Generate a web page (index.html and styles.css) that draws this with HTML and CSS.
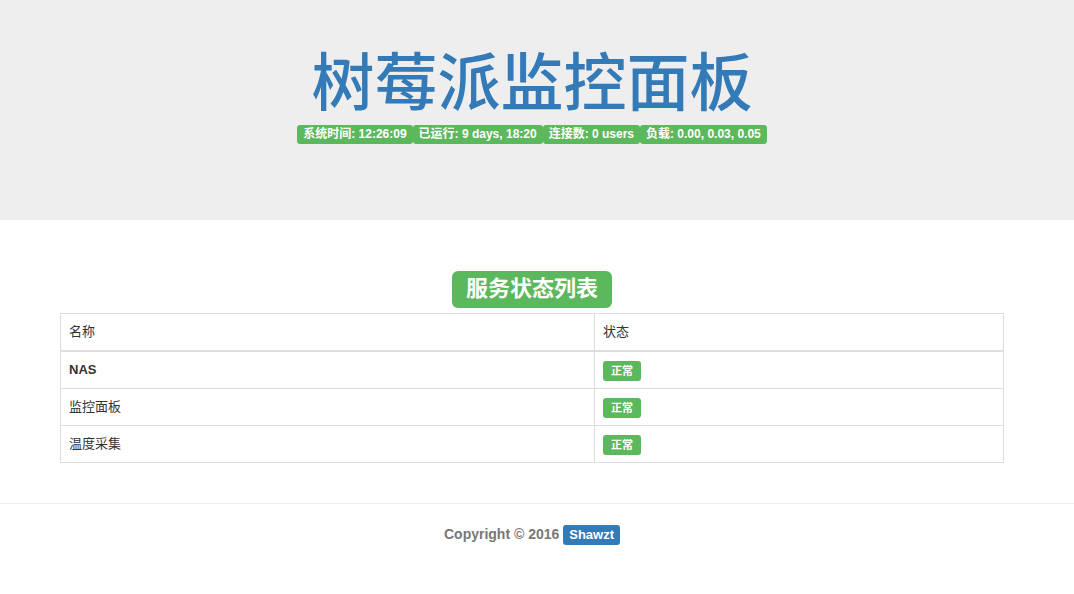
FILE: index.html
```html
<!DOCTYPE html>
<html lang="zh-CN">
<head>
<meta charset="utf-8">
<title>树莓派监控面板</title>
<link rel="stylesheet" href="styles.css">
</head>
<body>
<header class="jumbotron">
  <div class="inner">
    <h1 class="title">树莓派监控面板</h1>
    <div class="stats"><span class="label green">系统时间: 12:26:09</span><span class="label green">已运行: 9 days, 18:20</span><span class="label green">连接数: 0 users</span><span class="label green">负载: 0.00, 0.03, 0.05</span></div>
  </div>
</header>
<main class="container">
  <h3 class="section-title"><span class="section-label">服务状态列表</span></h3>
  <table class="table">
    <thead>
      <tr><th class="col-name">名称</th><th>状态</th></tr>
    </thead>
    <tbody>
      <tr><td class="strong">NAS</td><td><span class="badge">正常</span></td></tr>
      <tr><td>监控面板</td><td><span class="badge">正常</span></td></tr>
      <tr><td>温度采集</td><td><span class="badge">正常</span></td></tr>
    </tbody>
  </table>
</main>
<footer class="footer">
  <hr class="rule">
  <p class="copy">Copyright © 2016 <span class="label blue">Shawzt</span></p>
</footer>
</body>
</html>
```

FILE: styles.css
```css
html, body {
  margin: 0;
  padding: 0;
  background: #fff;
}
body {
  font-family: "Liberation Sans", "Noto Sans CJK SC", sans-serif;
  font-size: 14px;
  line-height: 1.42857;
  color: #333;
}
.jumbotron {
  background: #eee;
  height: 220px;
  box-sizing: border-box;
  padding-top: 40px;
}
.inner {
  width: 1064px;
  display: flex;
  flex-direction: column;
  align-items: center;
}
.title {
  margin: 0;
  font-family: "Noto Sans CJK SC", sans-serif;
  font-size: 63px;
  line-height: 76px;
  font-weight: 500;
  color: #337ab7;
}
.stats {
  display: flex;
  margin-top: 9px;
}
.label {
  display: inline-block;
  font-family: "Liberation Sans", "Noto Sans CJK SC", sans-serif;
  font-weight: 700;
  color: #fff;
  border-radius: 3px;
  white-space: nowrap;
}
.stats .label {
  font-size: 12px;
  line-height: 12px;
  padding: 3px 6px 4px;
}
.green { background: #5cb85c; }
.blue { background: #337ab7; }
.container {
  width: 944px;
  margin: 0 0 0 60px;
}
.section-title {
  margin: 51px 0 5px;
  text-align: center;
  line-height: 1;
}
.section-label {
  display: inline-block;
  background: #5cb85c;
  color: #fff;
  font-family: "Liberation Sans", "Noto Sans CJK SC", sans-serif;
  font-weight: 700;
  font-size: 22px;
  line-height: 22px;
  padding: 7px 14px 8px;
  border-radius: 6px;
}
.table {
  width: 100%;
  border-collapse: collapse;
  border: 1px solid #ddd;
}
.table th, .table td {
  border: 1px solid #ddd;
  padding: 8px;
  text-align: left;
  vertical-align: middle;
  line-height: 20px;
  font-size: 13px;
  font-weight: 400;
}
.table thead th {
  border-bottom: 2px solid #ddd;
}
.col-name { width: 517px; }
.strong { font-weight: 700 !important; }
.badge {
  display: inline-block;
  background: #5cb85c;
  color: #fff;
  font-size: 11px;
  font-weight: 700;
  line-height: 12px;
  padding: 4px 8px;
  border-radius: 3px;
  vertical-align: top;
  margin: 1px 0 -1px;
}
.footer {
  padding-top: 40px;
}
.rule {
  margin: 0;
  border: 0;
  border-top: 1px solid #eee;
}
.copy {
  width: 1064px;
  margin: 20px 0 0;
  text-align: center;
  font-weight: 700;
  color: #777;
  font-size: 14px;
  line-height: 20px;
}
.copy .label {
  font-size: 13px;
  line-height: 13px;
  padding: 3px 6px 4px;
}
```
